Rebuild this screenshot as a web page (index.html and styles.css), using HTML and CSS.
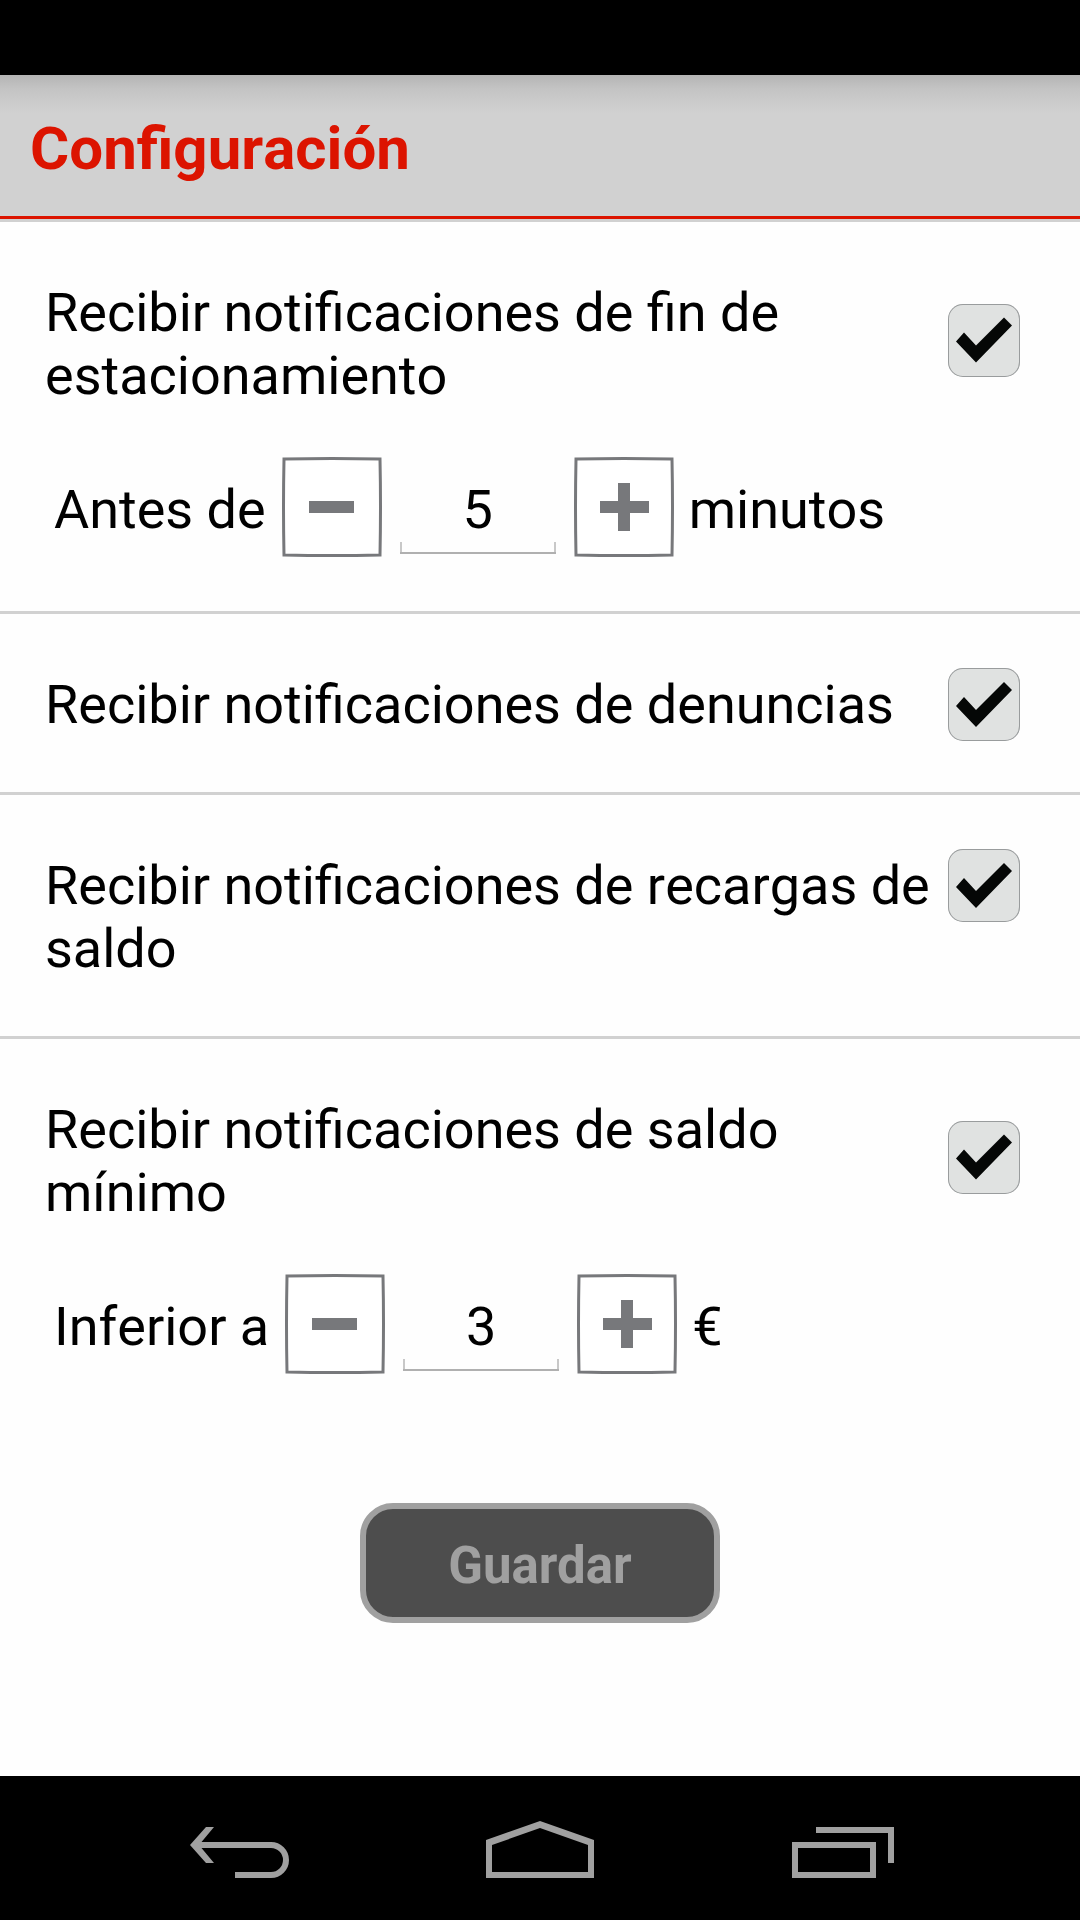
FILE: index.html
```html
<!DOCTYPE html>
<html lang="es">
<head>
  <meta charset="UTF-8">
  <meta name="viewport" content="width=device-width, initial-scale=1.0">
  <title>Configuración</title>
  <link rel="stylesheet" href="styles.css">
</head>
<body>
  <div class="status-bar"></div>

  <header class="header">
    <h1>Configuración</h1>
  </header>

  <form class="settings" id="settingsForm">
    <section class="option with-stepper">
      <div class="option-row">
        <label for="finEstacionamiento">Recibir notificaciones de fin de estacionamiento</label>
        <input type="checkbox" id="finEstacionamiento" checked>
      </div>
      <div class="stepper">
        <label for="minutos">Antes de</label>
        <button type="button" class="step-btn" aria-label="Menos minutos">
          <svg width="100" height="100" viewBox="0 0 100 100">
            <path class="frame" d="M2 2Q50 1 98 2Q99 50 98 98Q50 99 2 98Q1 50 2 2Z"/>
            <path d="M27 44h45v12H27z"/>
          </svg>
        </button>
        <input type="text" class="value" id="minutos" value="5">
        <button type="button" class="step-btn" aria-label="Más minutos">
          <svg width="100" height="100" viewBox="0 0 100 100">
            <path class="frame" d="M2 2Q50 1 98 2Q99 50 98 98Q50 99 2 98Q1 50 2 2Z"/>
            <path d="M26 44h18V26h12v18h19v12H56v18H44V56H26z"/>
          </svg>
        </button>
        <span class="unit">minutos</span>
      </div>
    </section>

    <section class="option">
      <div class="option-row">
        <label for="denuncias">Recibir notificaciones de denuncias</label>
        <input type="checkbox" id="denuncias" checked>
      </div>
    </section>

    <section class="option top-aligned">
      <div class="option-row">
        <label for="recargas">Recibir notificaciones de recargas de saldo</label>
        <input type="checkbox" id="recargas" checked>
      </div>
    </section>

    <section class="option with-stepper">
      <div class="option-row">
        <label for="saldoMinimo">Recibir notificaciones de saldo mínimo</label>
        <input type="checkbox" id="saldoMinimo" checked>
      </div>
      <div class="stepper">
        <label for="euros">Inferior a</label>
        <button type="button" class="step-btn" aria-label="Menos euros">
          <svg width="100" height="100" viewBox="0 0 100 100">
            <path class="frame" d="M2 2Q50 1 98 2Q99 50 98 98Q50 99 2 98Q1 50 2 2Z"/>
            <path d="M27 44h45v12H27z"/>
          </svg>
        </button>
        <input type="text" class="value" id="euros" value="3">
        <button type="button" class="step-btn" aria-label="Más euros">
          <svg width="100" height="100" viewBox="0 0 100 100">
            <path class="frame" d="M2 2Q50 1 98 2Q99 50 98 98Q50 99 2 98Q1 50 2 2Z"/>
            <path d="M26 44h18V26h12v18h19v12H56v18H44V56H26z"/>
          </svg>
        </button>
        <span class="unit">€</span>
      </div>
    </section>

    <button type="submit" class="save-btn" disabled>Guardar</button>
  </form>

  <nav class="nav-bar">
    <button type="button" aria-label="Atrás">
      <svg width="108" height="60" viewBox="0 0 108 60">
        <path d="M13 27H85A15 15 0 0 1 85 57H49" fill="none" stroke="#a0a0a0" stroke-width="6"/>
        <path d="M4 27L20 9h8L13 27l15 18h-8z" fill="#a0a0a0"/>
      </svg>
    </button>
    <button type="button" aria-label="Inicio">
      <svg width="108" height="60" viewBox="0 0 108 60">
        <path d="M0 22L54 3L108 22V60H0ZM6 27V54H102V27L54 10Z" fill="#a0a0a0" fill-rule="evenodd"/>
      </svg>
    </button>
    <button type="button" aria-label="Recientes">
      <svg width="108" height="60" viewBox="0 0 108 60">
        <path d="M9 27H87V57H9ZM30 12H105V45" fill="none" stroke="#a0a0a0" stroke-width="6"/>
      </svg>
    </button>
  </nav>
</body>
</html>
```
FILE: styles.css
```css
* {
  box-sizing: border-box;
}

body {
  font-family: Roboto, sans-serif;
  font-size: 54px;
  font-kerning: none;
  line-height: 63px;
  color: #000;
  background-color: #fefefe;
  margin: 0;
  min-height: 100vh;
  display: flex;
  flex-direction: column;
}

.status-bar {
  height: 75px;
  background-color: #000;
}

.header {
  height: 147px;
  padding: 0 30px;
  background: linear-gradient(#b4b4b4, #c4c4c4 14px, #d1d1d1 38px);
  display: flex;
  align-items: center;
  /* red line with a thin grey strip under it */
  box-shadow: inset 0 -3px #d1d1d1, inset 0 -6px #dc1400;
}

h1 {
  color: #dc1400;
  font-size: 60px;
  line-height: 70px;
  margin: 0;
}

.settings {
  display: flex;
  flex-direction: column;
}

.option {
  padding: 54px 60px 51px 45px;
  border-bottom: 3px solid #d1d1d1;
}

.option:last-of-type {
  border-bottom: none;
}

.option-row {
  display: flex;
  align-items: center;
  justify-content: space-between;
}

.option-row label {
  flex: 1;
  padding: 5px 0;
}

.with-stepper input[type="checkbox"] {
  margin-bottom: 8px;
}

.top-aligned .option-row {
  align-items: flex-start;
}

input[type="checkbox"] {
  appearance: none;
  flex: none;
  width: 72px;
  height: 73px;
  margin: 0;
  border-radius: 15px;
  background-color: #e0e2e1;
  box-shadow: inset 0 0 0 1px #999c9d;
}

input[type="checkbox"]:checked::before {
  content: "";
  display: block;
  height: 73px;
  background-color: #050706;
  clip-path: polygon(8px 38px, 16px 29px, 28px 42px, 56px 14px, 64px 22px, 28px 59px);
}

.stepper {
  display: flex;
  align-items: center;
  padding: 45px 0 3px 9px;
}

.stepper label {
  padding: 4px 16px 0 0;
}

.unit {
  padding: 4px 0 0 15px;
}

.step-btn {
  padding: 0;
  border: none;
  background: none;
  cursor: pointer;
}

.step-btn svg {
  display: block;
  fill: #77787b;
}

.step-btn .frame {
  fill: #fff;
  stroke: #77787b;
  stroke-width: 3;
}

.value {
  width: 156px;
  height: 100px;
  margin: 0 18px;
  padding: 4px 0 0;
  border: none;
  font: inherit;
  color: inherit;
  text-align: center;
  /* underline with a short tick at each end */
  background:
    linear-gradient(#b0b0b0, #b0b0b0) 0 95px / 100% 2px no-repeat,
    linear-gradient(#c8c8c8, #c8c8c8) 0 85px / 2px 12px no-repeat,
    linear-gradient(#c8c8c8, #c8c8c8) 100% 85px / 2px 12px no-repeat;
}

.save-btn {
  align-self: center;
  width: 360px;
  height: 120px;
  margin: 75px 0;
  padding: 4px 0 0;
  border: 6px solid #a0a0a0;
  border-radius: 33px;
  background-color: #4d4d4d;
  color: #a0a0a0;
  font-family: inherit;
  font-size: 51px;
  font-weight: bold;
}

.nav-bar {
  height: 144px;
  margin-top: auto;
  padding: 0 90px;
  background-color: #000;
  display: grid;
  grid-template-columns: repeat(3, 1fr);
}

.nav-bar button {
  display: flex;
  align-items: center;
  justify-content: center;
  border: none;
  background: none;
}
```
